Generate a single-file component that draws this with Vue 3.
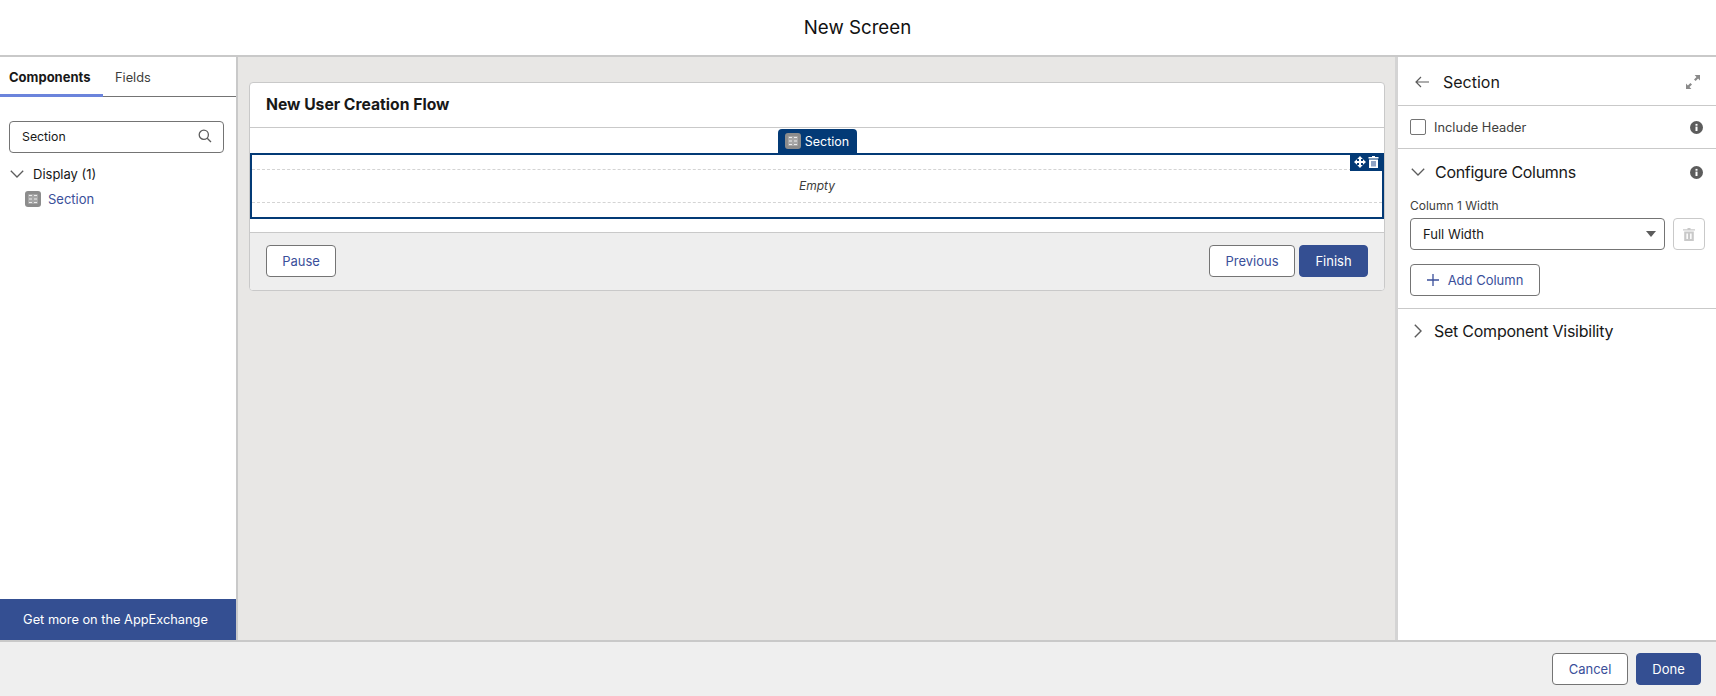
<script setup>
</script>

<template>
  <div class="page">
    <header class="top">New Screen</header>
    <div class="main">
      <aside class="left">
        <nav class="tabs">
          <span class="tab active">Components</span>
          <span class="tab">Fields</span>
        </nav>
        <div class="search">
          <span>Section</span>
          <svg width="14" height="14" viewBox="0 0 14 14" fill="none" stroke="#5c5c5c" stroke-width="1.3">
            <circle cx="5.8" cy="5.8" r="4.6" />
            <path d="M9.2 9.2 13 13" />
          </svg>
        </div>
        <div class="group">
          <svg width="14" height="8" viewBox="0 0 14 8" fill="none" stroke="#5c5c5c" stroke-width="1.3">
            <path d="M.8.8 7 7l6.2-6.2" />
          </svg>
          <span>Display (1)</span>
        </div>
        <div class="item">
          <svg class="sec-icon" width="16" height="16" viewBox="0 0 16 16">
            <rect width="16" height="16" rx="3" fill="#8c8c8c" />
            <rect x="3" y="3" width="10" height="10" rx="1" fill="#a6a6a6" />
            <path d="M4 4.5h3M9 4.5h3M4 8h3M9 8h3M4 11.5h3M9 11.5h3" stroke="#ececec" stroke-width="1.2" />
          </svg>
          <span>Section</span>
        </div>
        <div class="appx">Get more on the AppExchange</div>
      </aside>

      <section class="canvas">
        <div class="card">
          <div class="card-head">New User Creation Flow</div>
          <div class="card-body">
            <div class="tag-row">
              <div class="tag">
                <svg width="16" height="16" viewBox="0 0 16 16">
                  <rect width="16" height="16" rx="3" fill="#8c8c8c" />
                  <rect x="3" y="3" width="10" height="10" rx="1" fill="#a6a6a6" />
                  <path d="M4 4.5h3M9 4.5h3M4 8h3M9 8h3M4 11.5h3M9 11.5h3" stroke="#ececec" stroke-width="1.2" />
                </svg>
                <span>Section</span>
              </div>
            </div>
            <div class="selected">
              <div class="tools">
                <svg width="12" height="12" viewBox="0 0 12 12" fill="#fff">
                  <path d="M6 0 8.8 3H7V5H9V3.2L12 6 9 8.8V7H7V9H8.8L6 12 3.2 9H5V7H3V8.8L0 6 3 3.2V5H5V3H3.2Z" />
                </svg>
                <svg width="11" height="12" viewBox="0 0 11 12">
                  <path d="M4 0h3v1h3.5v1.6H.5V1H4Z" fill="#fff" />
                  <path d="M1 3.4h9V12H1Z" fill="#fff" />
                  <path d="M3 5h5v5.4H3Z" fill="#8fa3c4" />
                </svg>
              </div>
              <div class="drop">Empty</div>
            </div>
          </div>
          <div class="card-foot">
            <button class="btn">Pause</button>
            <div class="foot-right">
              <button class="btn prev">Previous</button>
              <button class="btn brand finish">Finish</button>
            </div>
          </div>
        </div>
      </section>

      <aside class="right">
        <div class="r-head">
          <svg class="back" width="14" height="12" viewBox="0 0 14 12" fill="none" stroke="#5c5c5c" stroke-width="1.2">
            <path d="M14 6H1M6 1 1 6l5 5" />
          </svg>
          <span class="r-title">Section</span>
          <svg width="14" height="14" viewBox="0 0 14 14" fill="#8a8a8a">
            <path d="M8.6 0H14v5.4L12.1 3.5 9.6 6 8 4.4 10.5 1.9Z" />
            <path d="M5.4 14H0V8.6L1.9 10.5 4.4 8 6 9.6 3.5 12.1Z" />
          </svg>
        </div>
        <div class="r-row include">
          <span class="check"></span>
          <span class="inc-label">Include Header</span>
          <svg class="info" width="13" height="13" viewBox="0 0 13 13">
            <circle cx="6.5" cy="6.5" r="6.5" fill="#5c5c5c" />
            <rect x="5.5" y="5.6" width="2" height="4.4" fill="#fff" />
            <rect x="5.5" y="2.9" width="2" height="1.8" fill="#fff" />
          </svg>
        </div>
        <div class="config">
          <div class="sec-head">
            <svg class="chev" width="14" height="8" viewBox="0 0 14 8" fill="none" stroke="#5c5c5c" stroke-width="1.3">
              <path d="M.8.8 7 7l6.2-6.2" />
            </svg>
            <span>Configure Columns</span>
            <svg class="info" width="13" height="13" viewBox="0 0 13 13">
              <circle cx="6.5" cy="6.5" r="6.5" fill="#5c5c5c" />
              <rect x="5.5" y="5.6" width="2" height="4.4" fill="#fff" />
              <rect x="5.5" y="2.9" width="2" height="1.8" fill="#fff" />
            </svg>
          </div>
          <label class="col-label">Column 1 Width</label>
          <div class="col-row">
            <div class="select">
              <span>Full Width</span>
              <i class="caret"></i>
            </div>
            <div class="trash">
              <svg width="12" height="13" viewBox="0 0 12 13">
                <path d="M4.5 0h3v1.2H12v1.3H0V1.2h4.5Z" fill="#c9c9c9" />
                <path d="M1.2 3.4h9.6V13H1.2Zm2.2 2v5.6h1.5V5.4Zm3.7 0v5.6h1.5V5.4Z" fill="#c9c9c9" fill-rule="evenodd" />
              </svg>
            </div>
          </div>
          <button class="btn add">
            <svg width="12" height="12" viewBox="0 0 12 12" stroke="#3a4f9a" stroke-width="1.3">
              <path d="M6 0v12M0 6h12" />
            </svg>
            <span>Add Column</span>
          </button>
        </div>
        <div class="vis">
          <svg width="8" height="14" viewBox="0 0 8 14" fill="none" stroke="#5c5c5c" stroke-width="1.4">
            <path d="M.8.8 7 7 .8 13.2" />
          </svg>
          <span>Set Component Visibility</span>
        </div>
      </aside>
    </div>
    <footer class="bottom">
      <button class="btn cancel">Cancel</button>
      <button class="btn brand done">Done</button>
    </footer>
  </div>
</template>

<style>
html, body { margin: 0; background: #fff; }
</style>

<style scoped>
.page {
  width: 1716px;
  height: 696px;
  display: flex;
  flex-direction: column;
  overflow: hidden;
  font-family: Inter, "Liberation Sans", sans-serif;
  color: #181818;
  font-size: 13px;
}
.top {
  height: 55px;
  flex: none;
  display: flex;
  align-items: center;
  justify-content: center;
  font-size: 18.7px;
  background: #fff;
  color: #111;
  padding-right: 1px;
  box-sizing: border-box;
}
.main {
  height: 583px;
  flex: none;
  display: flex;
  border-top: 2px solid #c9c9c9;
  border-bottom: 2px solid #c9c9c9;
}
.left {
  width: 236px;
  flex: none;
  border-right: 2px solid #c9c9c9;
  display: flex;
  flex-direction: column;
  background: #fff;
}
.tabs {
  height: 40px;
  display: flex;
  box-sizing: border-box;
  border-bottom: 1px solid #747474;
  flex: none;
}
.tab {
  padding: 0 9px;
  height: 40px;
  box-sizing: border-box;
  display: flex;
  align-items: center;
  font-size: 12.8px;
  color: #3e3e3c;
}
.tab + .tab { padding-left: 12px; }
.tab.active {
  width: 103px;
  font-weight: 700;
  color: #181818;
  border-bottom: 3px solid #6b84dc;
  padding-top: 3px;
  font-size: 13px;
}
.search {
  margin: 24px 12px 0 9px;
  height: 32px;
  box-sizing: border-box;
  border: 1px solid #747474;
  border-radius: 4px;
  display: flex;
  align-items: center;
  justify-content: space-between;
  padding: 0 11px 2px 12px;
  font-size: 12.3px;
  flex: none;
}
.group {
  margin: 13px 0 0 10px;
  display: flex;
  align-items: center;
  gap: 9px;
  height: 16px;
  flex: none;
}
.item {
  margin: 9px 0 0 25px;
  display: flex;
  align-items: center;
  gap: 7px;
  height: 16px;
  color: #3a4f9a;
  flex: none;
}
.appx {
  margin-top: auto;
  height: 41px;
  flex: none;
  background: #344f92;
  color: #fff;
  display: flex;
  align-items: center;
  justify-content: center;
  font-size: 12.8px;
  padding-right: 5px;
  box-sizing: border-box;
}
.canvas {
  flex: 1;
  background: #e8e7e5;
  padding: 25px 10px 0 11px;
  box-sizing: border-box;
  border-right: 3px solid #d4d4d4;
}
.card {
  height: 209px;
  box-sizing: border-box;
  border: 1px solid #c9c9c9;
  border-radius: 4px;
  background: #fff;
  overflow: hidden;
}
.card-head {
  height: 45px;
  box-sizing: border-box;
  border-bottom: 1px solid #c9c9c9;
  display: flex;
  align-items: center;
  padding: 0 0 2px 16px;
  font-size: 15.7px;
  font-weight: 700;
}
.card-body {
  height: 104px;
  box-sizing: border-box;
  padding-top: 1px;
}
.tag-row {
  height: 24px;
  display: flex;
  justify-content: center;
}
.tag {
  width: 79px;
  height: 24px;
  box-sizing: border-box;
  background: #033a76;
  color: #fff;
  border-radius: 4px 4px 0 0;
  display: flex;
  align-items: center;
  justify-content: center;
  gap: 4px;
  font-size: 12.5px;
}
.selected {
  position: relative;
  height: 66px;
  box-sizing: border-box;
  border: 2px solid #033a76;
  padding: 14px 0;
}
.tools {
  position: absolute;
  top: -2px;
  right: -2px;
  width: 34px;
  height: 18px;
  background: #033a76;
  display: flex;
  align-items: center;
  justify-content: center;
  gap: 2px;
  padding-right: 2px;
  box-sizing: border-box;
}
.drop {
  height: 34px;
  box-sizing: border-box;
  border-top: 1px dashed #d4d4d4;
  border-bottom: 1px dashed #d4d4d4;
  display: flex;
  align-items: center;
  justify-content: center;
  font-style: italic;
  font-size: 12px;
  color: #3e3e3c;
  padding-bottom: 2px;
}
.card-foot {
  height: 58px;
  box-sizing: border-box;
  border-top: 1px solid #c9c9c9;
  background: #eeeeee;
  display: flex;
  align-items: center;
  justify-content: space-between;
  padding: 0 16px 1px;
}
.foot-right {
  display: flex;
  gap: 4px;
}
.btn {
  height: 32px;
  box-sizing: border-box;
  border: 1px solid #747474;
  border-radius: 4px;
  background: #fff;
  color: #3a4f9a;
  font-family: inherit;
  font-size: 13px;
  padding: 0;
  width: 70px;
}
.brand {
  background: #344f92;
  border-color: #344f92;
  color: #fff;
}
.prev { width: 86px; }
.finish { width: 69px; }
.right {
  width: 318px;
  flex: none;
  background: #fff;
  display: flex;
  flex-direction: column;
}
.r-head {
  height: 49px;
  box-sizing: border-box;
  border-bottom: 1px solid #c9c9c9;
  display: flex;
  align-items: center;
  padding: 1px 16px 0 17px;
  flex: none;
}
.r-title {
  margin-left: 14px;
  font-size: 16px;
  flex: 1;
}
.r-row {
  height: 43px;
  box-sizing: border-box;
  border-bottom: 1px solid #c9c9c9;
  display: flex;
  align-items: center;
  padding: 0 13px 0 12px;
  flex: none;
}
.check {
  width: 16px;
  height: 16px;
  box-sizing: border-box;
  border: 1px solid #747474;
  border-radius: 2px;
}
.inc-label {
  margin-left: 8px;
  flex: 1;
  color: #3e3e3c;
  font-size: 12.8px;
}
.config {
  height: 160px;
  box-sizing: border-box;
  border-bottom: 1px solid #c9c9c9;
  padding: 0 11px 0 12px;
  flex: none;
}
.sec-head {
  height: 46px;
  display: flex;
  align-items: center;
  font-size: 16px;
}
.sec-head span { flex: 1; margin-left: 10px; letter-spacing: -0.3px; padding-bottom: 1px; }
.sec-head .chev { margin-left: 1px; }
.sec-head .info { margin-right: 2px; }
.col-label {
  display: block;
  font-size: 12px;
  line-height: 16px;
  color: #3e3e3c;
  margin-top: 3px;
}
.col-row {
  margin-top: 4px;
  display: flex;
  gap: 8px;
}
.select {
  width: 255px;
  height: 32px;
  box-sizing: border-box;
  border: 1px solid #747474;
  border-radius: 4px;
  display: flex;
  align-items: center;
  justify-content: space-between;
  padding: 0 8px 0 12px;
  font-size: 13px;
}
.caret {
  width: 0;
  height: 0;
  border-left: 5px solid transparent;
  border-right: 5px solid transparent;
  border-top: 6px solid #5c5c5c;
}
.trash {
  width: 32px;
  height: 32px;
  box-sizing: border-box;
  border: 1px solid #c9c9c9;
  border-radius: 4px;
  display: flex;
  align-items: center;
  justify-content: center;
}
.add {
  margin-top: 14px;
  width: 130px;
  display: flex;
  align-items: center;
  justify-content: center;
  gap: 9px;
}
.vis {
  height: 43px;
  display: flex;
  align-items: center;
  font-size: 16px;
  letter-spacing: -0.25px;
  padding-left: 16px;
  gap: 12px;
  flex: none;
}
.bottom {
  flex: 1;
  background: #efefef;
  display: flex;
  align-items: center;
  justify-content: flex-end;
  gap: 8px;
  padding-right: 15px;
}
.cancel { width: 76px; }
.done { width: 65px; }
</style>
